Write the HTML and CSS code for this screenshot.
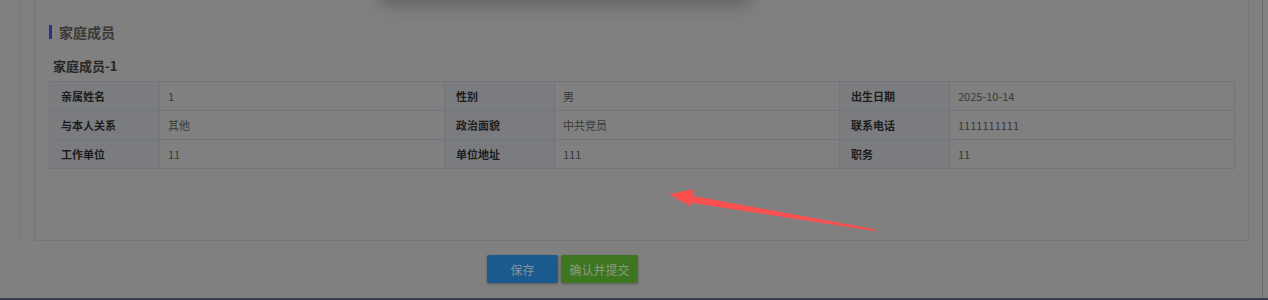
FILE: index.html
```html
<!DOCTYPE html>
<html lang="zh-CN">
<head>
<meta charset="utf-8">
<title>家庭成员</title>
<link rel="stylesheet" href="styles.css">
</head>
<body>
<div class="screen">
  <div class="main">
    <div class="outer">
      <div class="inner">
        <div class="section-title"><span class="bar"></span><span>家庭成员</span></div>
        <div class="sub-title">家庭成员-1</div>
        <table class="info">
          <colgroup>
            <col class="c-label"><col class="c-value">
            <col class="c-label"><col class="c-value">
            <col class="c-label"><col class="c-value">
          </colgroup>
          <tr>
            <th>亲属姓名</th><td>1</td>
            <th>性别</th><td>男</td>
            <th>出生日期</th><td>2025-10-14</td>
          </tr>
          <tr>
            <th>与本人关系</th><td>其他</td>
            <th>政治面貌</th><td>中共党员</td>
            <th>联系电话</th><td>1111111111</td>
          </tr>
          <tr>
            <th>工作单位</th><td>11</td>
            <th>单位地址</th><td>111</td>
            <th>职务</th><td>11</td>
          </tr>
        </table>
      </div>
    </div>
    <div class="actions">
      <button class="btn btn-save">保存</button>
      <button class="btn btn-submit">确认并提交</button>
    </div>
  </div>
  <div class="edge"></div>
</div>
<div class="footer-bar"></div>
<div class="modal-shadow"></div>
<svg class="arrow" width="1268" height="300" viewBox="0 0 1268 300">
  <polygon points="669,194.3 693.3,189.3 693.5,196 876.5,229.6 876,231.2 690.5,202.8 690.7,206.8" fill="#fa5050"/>
</svg>
</body>
</html>
```

FILE: styles.css
```css
html, body {
  margin: 0;
  padding: 0;
}
body {
  width: 1268px;
  height: 300px;
  overflow: hidden;
  background: #808080;
  font-family: "Noto Sans CJK SC", "Noto Sans", sans-serif;
  position: relative;
}
.screen {
  display: flex;
  height: 298px;
}
.main {
  width: 1262px;
  display: flex;
  flex-direction: column;
}
.outer {
  margin-left: 19px;
  margin-right: 13px;
  padding-left: 14px;
  border-left: 1px solid #777777;
}
.inner {
  border: 1px solid #767676;
  border-top: none;
  padding: 22px 14px 71px 14px;
}
.section-title {
  display: flex;
  align-items: center;
  gap: 7px;
  height: 20px;
  font-size: 14px;
  font-weight: 700;
  color: #3a3a3a;
}
.bar {
  width: 3px;
  height: 14px;
  background: #22358a;
}
.sub-title {
  margin-top: 14px;
  padding-left: 4px;
  height: 20px;
  line-height: 20px;
  font-size: 13px;
  font-weight: 700;
  color: #262626;
}
.info {
  margin-top: 5px;
  width: 1185px;
  border-collapse: collapse;
  table-layout: fixed;
  font-size: 11px;
}
.c-label { width: 110px; }
.c-value { width: 285px; }
.info th, .info td {
  height: 29px;
  padding: 0;
  border: 1px solid #73757c;
  text-align: left;
  box-sizing: border-box;
}
.info th {
  background: #7b7c80;
  color: #1c1c1c;
  font-weight: 700;
  padding-left: 11px;
}
.info td {
  color: #383838;
  padding-left: 8px;
}
.actions {
  display: flex;
  gap: 3px;
  margin-top: 14px;
  padding-left: 487px;
}
.btn {
  height: 28px;
  border: none;
  border-radius: 2px;
  font-family: "Noto Sans CJK SC", sans-serif;
  font-size: 12px;
  color: #8a929a;
  box-shadow: 0 1px 3px rgba(0, 0, 0, 0.3);
  padding: 0;
}
.btn-save {
  width: 71px;
  background: #1a5a8f;
}
.btn-submit {
  width: 77px;
  background: #3d7521;
  color: #8c9a84;
}
.edge {
  width: 5px;
  border-left: 1px solid #6c6c6c;
  background: #828282;
}
.footer-bar {
  height: 2px;
  background: #3b3e4d;
}
.modal-shadow {
  position: absolute;
  top: -40px;
  left: 385px;
  width: 360px;
  height: 40px;
  box-shadow: 0 0 18px 4px rgba(0, 0, 0, 0.28);
}
.arrow {
  position: absolute;
  left: 0;
  top: 0;
  pointer-events: none;
}
```
